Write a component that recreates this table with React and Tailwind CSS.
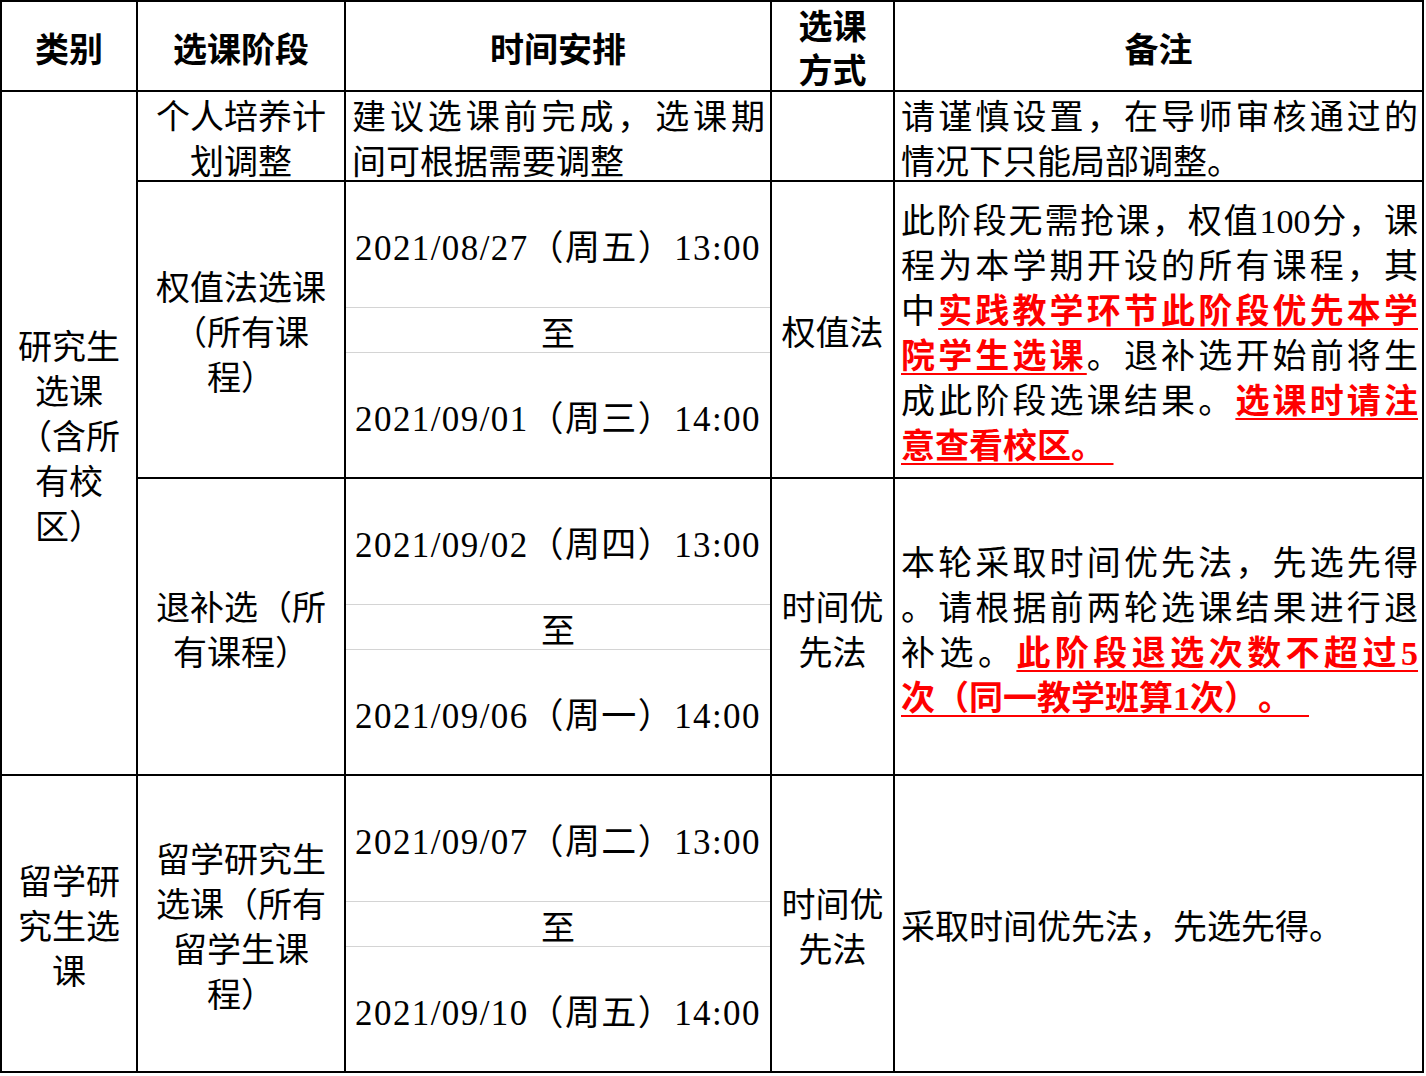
import React from 'react';

const font = "font-['Liberation_Serif','Noto_Sans_CJK_SC',serif]";

// one line stretched to the full cell width
const J = ({ children }) => (
  <div className="text-justify [text-align-last:justify]">{children}</div>
);

const Red = ({ children }) => (
  <span className="font-bold text-[#ff0000] underline decoration-2 underline-offset-[5px]">
    {children}
  </span>
);

const Center = ({ lines, className = '' }) => (
  <div className={`flex flex-col items-center justify-center text-center pt-[8px] border-r-2 border-b-2 border-black ${className}`}>
    {lines.map((l) => (
      <div key={l}>{l}</div>
    ))}
  </div>
);

const TimeCell = ({ from, to }) => (
  <div className="flex flex-col border-r-2 border-b-2 border-black">
    <div className="h-[126px] flex items-center justify-center pt-[8px] border-b border-[#d4d4d4] text-[35px] tracking-[1.4px]">{from}</div>
    <div className="h-[45px] flex items-center justify-center pt-[8px] border-b border-[#d4d4d4]">至</div>
    <div className="flex-1 flex items-center justify-center pt-[8px] text-[35px] tracking-[1.4px]">{to}</div>
  </div>
);

const Note = ({ children }) => (
  <div className="flex items-center pl-[6px] pr-[4px] pt-[8px] border-r-2 border-b-2 border-black">
    <div className="w-full">{children}</div>
  </div>
);

export default function App() {
  return (
    <div className={`w-[1426px] h-[1076px] bg-white text-black text-[34px] leading-[45px] ${font} [text-spacing-trim:space-all]`}>
      <div className="grid grid-cols-[136px_208px_426px_123px_529px] grid-rows-[90px_90px_297px_297px_297px] w-fit border-l-2 border-t-2 border-black">
        {/* header */}
        <Center lines={['类别']} className="font-bold" />
        <Center lines={['选课阶段']} className="font-bold" />
        <Center lines={['时间安排']} className="font-bold" />
        <Center lines={['选课', '方式']} className="font-bold leading-[44px]" />
        <Center lines={['备注']} className="font-bold" />

        {/* 研究生选课 */}
        <Center lines={['研究生', '选课', '（含所', '有校', '区）']} className="row-span-3" />
        <Center lines={['个人培养计', '划调整']} />
        <div className="flex flex-col justify-center pl-[6px] pr-[5px] pt-[8px] border-r-2 border-b-2 border-black">
          <J>建议选课前完成，选课期</J>
          <div>间可根据需要调整</div>
        </div>
        <div className="border-r-2 border-b-2 border-black" />
        <Note>
          <J>请谨慎设置，在导师审核通过的</J>
          <div>情况下只能局部调整。</div>
        </Note>

        <Center lines={['权值法选课', '（所有课', '程）']} />
        <TimeCell from="2021/08/27（周五）13:00" to="2021/09/01（周三）14:00" />
        <Center lines={['权值法']} />
        <Note>
          <J>此阶段无需抢课，权值100分，课</J>
          <J>程为本学期开设的所有课程，其</J>
          <J>
            中<Red>实践教学环节此阶段优先本学</Red>
          </J>
          <J>
            <Red>院学生选课</Red>。退补选开始前将生
          </J>
          <J>
            成此阶段选课结果。<Red>选课时请注</Red>
          </J>
          <div>
            <Red>意查看校区。{'\u00a0'}</Red>
          </div>
        </Note>

        <Center lines={['退补选（所', '有课程）']} />
        <TimeCell from="2021/09/02（周四）13:00" to="2021/09/06（周一）14:00" />
        <Center lines={['时间优', '先法']} />
        <Note>
          <J>本轮采取时间优先法，先选先得</J>
          <J>。请根据前两轮选课结果进行退</J>
          <J>
            补选。<Red>此阶段退选次数不超过5</Red>
          </J>
          <div>
            <Red>次（同一教学班算1次）。{'\u00a0\u00a0'}</Red>
          </div>
        </Note>

        {/* 留学研究生选课 */}
        <Center lines={['留学研', '究生选', '课']} />
        <Center lines={['留学研究生', '选课（所有', '留学生课', '程）']} />
        <TimeCell from="2021/09/07（周二）13:00" to="2021/09/10（周五）14:00" />
        <Center lines={['时间优', '先法']} />
        <Note>
          <div>采取时间优先法，先选先得。</div>
        </Note>
      </div>
    </div>
  );
}
